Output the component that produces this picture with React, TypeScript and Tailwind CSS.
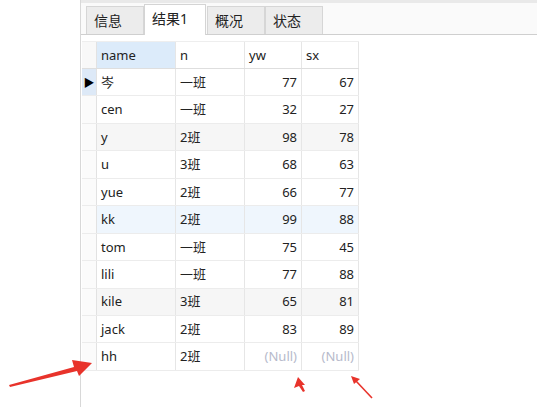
const rows = [
  { name: "岑", n: "一班", yw: "77", sx: "67", bg: "bg-white", active: true },
  { name: "cen", n: "一班", yw: "32", sx: "27", bg: "bg-white" },
  { name: "y", n: "2班", yw: "98", sx: "78", bg: "bg-[#f6f6f6]" },
  { name: "u", n: "3班", yw: "68", sx: "63", bg: "bg-white" },
  { name: "yue", n: "2班", yw: "66", sx: "77", bg: "bg-white" },
  { name: "kk", n: "2班", yw: "99", sx: "88", bg: "bg-[#eff6fd]" },
  { name: "tom", n: "一班", yw: "75", sx: "45", bg: "bg-white" },
  { name: "lili", n: "一班", yw: "77", sx: "88", bg: "bg-white" },
  { name: "kile", n: "3班", yw: "65", sx: "81", bg: "bg-[#f6f6f6]" },
  { name: "jack", n: "2班", yw: "83", sx: "89", bg: "bg-white" },
  { name: "hh", n: "2班", yw: null, sx: null, bg: "bg-white" },
];

const font = "font-['Noto_Sans','Noto_Sans_CJK_SC',sans-serif]";

const Tab = ({ label, active }: { label: string; active?: boolean }) => (
  <div
    className={
      active
        ? "h-[31px] w-[62px] bg-white border border-b-0 border-[#d4d4d4] -mb-px pl-[7px] pt-[3px] text-[14px] text-[#222]"
        : "h-[28px] bg-[#ececec] border border-b-0 border-[#d6d6d6] pl-[7px] pt-[3px] text-[14px] text-[#222]"
    }
  >
    {label}
  </div>
);

const Cell = ({
  children,
  w,
  right,
  className = "",
}: {
  children?: React.ReactNode;
  w: string;
  right?: boolean;
  className?: string;
}) => (
  <div
    className={`${w} shrink-0 h-full flex items-center border-r border-[#e6e6e6] px-[4px] pt-px ${
      right ? "justify-end" : ""
    } ${className}`}
  >
    {children}
  </div>
);

export default function App() {
  return (
    <div className={`relative w-[537px] h-[407px] bg-white flex overflow-hidden ${font}`}>
      <div className="w-[81px] shrink-0 border-r border-[#d8d8d8]" />

      <div className="flex-1 flex flex-col">
        {/* tab strip */}
        <div className="h-[35px] bg-[#fafafa] border-t-[3px] border-[#e9e9e9] border-b border-b-[#cfcfcf] flex items-end pl-[5px]">
          <div className="flex items-end">
            <div className="w-[58px]">
              <Tab label="信息" />
            </div>
            <Tab label="结果1" active />
            <div className="w-[58px] ml-[1px]">
              <Tab label="概况" />
            </div>
            <div className="w-[58px]">
              <Tab label="状态" />
            </div>
          </div>
        </div>

        {/* grid */}
        <div className="mt-[6px] ml-[1px] w-[277px] text-[13px] text-[#222]">
          <div className="flex h-[28px] border-b border-[#dedede] border-t border-t-[#eeeeee]">
            <div className="w-[15px] shrink-0 h-full border-r border-[#e2e2e2] bg-[#f8f8f8]" />
            <Cell w="w-[79px]" className="bg-[#dcebfa]">name</Cell>
            <Cell w="w-[69px]">n</Cell>
            <Cell w="w-[57px]">yw</Cell>
            <Cell w="w-[57px]">sx</Cell>
          </div>
          {rows.map((r, i) => (
            <div key={i} className={`flex h-[27.45px] border-b border-[#ececec] ${r.bg}`}>
              <div
                className={`w-[15px] shrink-0 h-full border-r border-[#e2e2e2] flex items-center justify-center ${
                  r.active ? "bg-[#dde9f7]" : "bg-[#fbfbfb]"
                }`}
              >
                {r.active && <span className="text-[11px] leading-none text-black">▶</span>}
              </div>
              <Cell w="w-[79px]">{r.name}</Cell>
              <Cell w="w-[69px]">{r.n}</Cell>
              <Cell w="w-[57px]" right>
                {r.yw ?? <span className="text-[#b6bacb]">(Null)</span>}
              </Cell>
              <Cell w="w-[57px]" right>
                {r.sx ?? <span className="text-[#b6bacb]">(Null)</span>}
              </Cell>
            </div>
          ))}
        </div>
      </div>

      {/* red annotation arrows */}
      <svg className="absolute left-0 top-0 pointer-events-none" width="537" height="407">
        <polygon
          points="9,385 74,367 72,360 92,363 79,376 77,371 10,387"
          fill="#e8332b"
        />
        <polygon points="298,377 294,388 299,386 303,392 305,391 302,385 305,385" fill="#e8332b" />
        <line x1="372" y1="398" x2="356" y2="381" stroke="#e8332b" strokeWidth="1.6" />
        <polygon points="351,376 360,379 354,384" fill="#e8332b" />
      </svg>
    </div>
  );
}
